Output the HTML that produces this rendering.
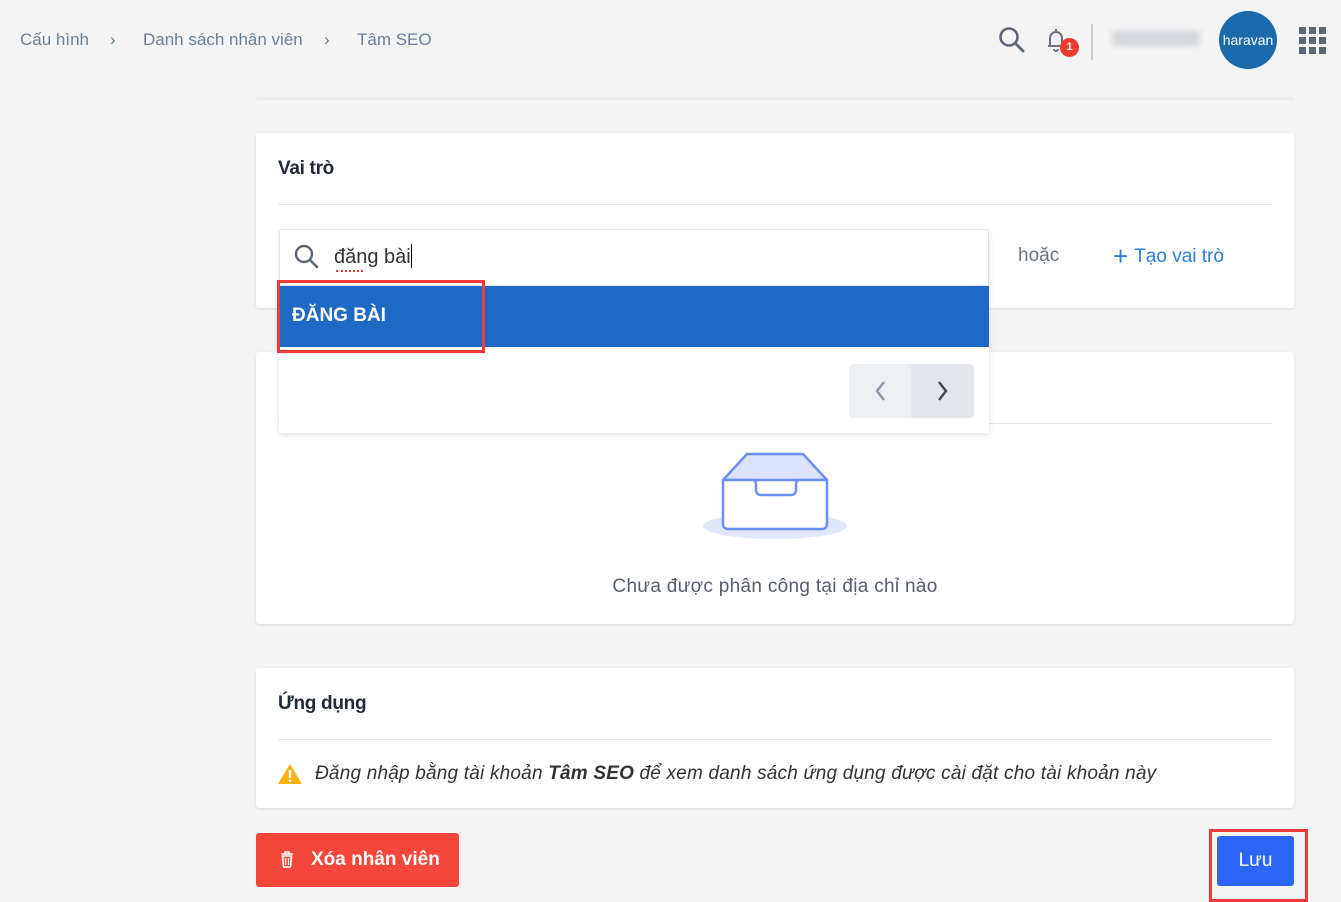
<!DOCTYPE html>
<html><head><meta charset="utf-8"><style>
*{box-sizing:border-box;margin:0;padding:0}
body{width:1341px;height:902px;background:#f4f4f4;font-family:"Liberation Sans",sans-serif;position:relative;overflow:hidden;color:#212b36}
.a{position:absolute}
.card{position:absolute;left:256px;width:1038px;background:#fff;border-radius:3px;box-shadow:0 1px 3px rgba(0,0,0,.1)}
.bc{font-size:17px;color:#6a7f99;top:30px}
.title{font-size:19px;font-weight:bold;color:#212b36;letter-spacing:-.3px}
.div{position:absolute;left:22px;right:22px;height:1px;background:#e3e6ea}
</style></head><body>
<div class="a bc" style="left:20px">Cấu hình</div>
<div class="a bc" style="left:110px">›</div>
<div class="a bc" style="left:143px">Danh sách nhân viên</div>
<div class="a bc" style="left:324px">›</div>
<div class="a bc" style="left:357px">Tâm SEO</div>

<div class="a" style="left:256px;top:97px;width:1038px;height:2px;background:#ebebeb;box-shadow:0 1px 2px rgba(0,0,0,.05)"></div>

<svg class="a" style="left:997px;top:25px" width="30" height="30" viewBox="0 0 30 30"><circle cx="12" cy="12" r="8.5" fill="none" stroke="#5b6676" stroke-width="2.6"/><path d="M18 18l8 8" stroke="#5b6676" stroke-width="2.8" stroke-linecap="round"/></svg>
<svg class="a" style="left:1044px;top:26px" width="26" height="28" viewBox="0 0 26 28"><path d="M4 20h16M6 20v-8a6 6 0 0 1 12 0v8M10 23a2 2 0 0 0 4 0M12 3v3" fill="none" stroke="#6b7482" stroke-width="2"/></svg>
<div class="a" style="left:1060px;top:38px;width:19px;height:19px;border-radius:50%;background:#f13b2f;color:#fff;font-size:11px;font-weight:bold;text-align:center;line-height:19px">1</div>
<div class="a" style="left:1091px;top:24px;width:2px;height:36px;background:#ccc"></div>
<div class="a" style="left:1112px;top:30px;width:88px;height:16px;background:#d5d9de;filter:blur(3px);border-radius:4px"></div>
<div class="a" style="left:1219px;top:11px;width:58px;height:58px;border-radius:50%;background:#1b6aac;color:#fff;font-size:14px;line-height:58px;text-align:center;overflow:hidden">haravan</div>
<svg class="a" style="left:1299px;top:27px" width="27" height="27" viewBox="0 0 27 27" fill="#5b6676"><rect x="0" y="0" width="7" height="7"/><rect x="10" y="0" width="7" height="7"/><rect x="20" y="0" width="7" height="7"/><rect x="0" y="10" width="7" height="7"/><rect x="10" y="10" width="7" height="7"/><rect x="20" y="10" width="7" height="7"/><rect x="0" y="20" width="7" height="7"/><rect x="10" y="20" width="7" height="7"/><rect x="20" y="20" width="7" height="7"/></svg>

<div class="card" style="top:133px;height:175px">
<div class="a title" style="left:22px;top:25px">Vai trò</div>
<div class="div" style="top:71px"></div>
<div class="a" style="left:762px;top:112px;font-size:19px;color:#6b7482">hoặc</div>
<div class="a" style="left:857px;top:113px;font-size:19px;color:#2a7de1"><span style="font-size:26px;line-height:19px;vertical-align:-3px;margin-right:6px">+</span>Tạo vai trò</div>
</div>

<div class="card" style="top:352px;height:272px">
<div class="div" style="top:71px"></div>
<svg class="a" style="left:445px;top:98px" width="150" height="94" viewBox="0 0 150 94"><ellipse cx="74" cy="76" rx="72" ry="13" fill="#e1e7fb"/><path d="M22 30L46 4h56l24 26z" fill="#dbe3fd" stroke="#6b8ff5" stroke-width="2.5" stroke-linejoin="round"/><path d="M22 30h30c3 0 3 3 3 6v4c0 3 2 5 5 5h30c3 0 5-2 5-5v-4c0-3 0-6 3-6h28v44c0 3-2 5-5 5H27c-3 0-5-2-5-5z" fill="#fff" stroke="#6b8ff5" stroke-width="2.5" stroke-linejoin="round"/></svg>
<div class="a" style="left:0;right:0;top:224px;text-align:center;font-size:19px;color:#555e6b;letter-spacing:.3px">Chưa được phân công tại địa chỉ nào</div>
</div>

<div class="a" style="left:279px;top:229px;width:710px;height:204px;background:#fff;border-radius:3px;box-shadow:0 2px 6px rgba(0,0,0,.12)">
<div class="a" style="left:0;top:0;width:710px;height:57px;border:1px solid #e1e4e8;border-radius:3px 3px 0 0"></div>
<svg class="a" style="left:14px;top:14px" width="28" height="28" viewBox="0 0 28 28"><circle cx="11" cy="11" r="8" fill="none" stroke="#5b6676" stroke-width="2.4"/><path d="M17 17l7 7" stroke="#5b6676" stroke-width="2.6" stroke-linecap="round"/></svg>
<div class="a" style="left:55px;top:15px;font-size:20px;color:#333">đăng bài<span style="display:inline-block;width:1px;height:24px;background:#000;vertical-align:-5px"></span></div>
<div class="a" style="left:57px;top:40px;width:27px;height:3px;border-bottom:2px dotted #e33"></div>
<div class="a" style="left:0;top:57px;width:710px;height:61px;background:#1f69c6"></div>
<div class="a" style="left:13px;top:76px;font-size:19px;color:#fff;font-weight:bold">ĐĂNG BÀI</div>
<div class="a" style="left:570px;top:135px;width:125px;height:54px;background:#edf0f3;border-radius:4px"></div>
<div class="a" style="left:632px;top:135px;width:63px;height:54px;background:#e2e6ea;border-radius:0 4px 4px 0"></div>
<svg class="a" style="left:594px;top:150px" width="16" height="24"><path d="M11 3L4 12l7 9" fill="none" stroke="#8a94a2" stroke-width="2.4"/></svg>
<svg class="a" style="left:655px;top:150px" width="16" height="24"><path d="M5 3l7 9-7 9" fill="none" stroke="#3b4656" stroke-width="2.4"/></svg>
</div>
<div class="a" style="left:277px;top:280px;width:208px;height:73px;border:3px solid #f0393d"></div>

<div class="card" style="top:668px;height:140px">
<div class="a title" style="left:22px;top:25px">Ứng dụng</div>
<div class="div" style="top:71px"></div>
<svg class="a" style="left:21px;top:94px" width="26" height="24" viewBox="0 0 26 24"><path d="M13 2L25 22H1z" fill="#f6b20e"/><rect x="11.8" y="8" width="2.4" height="8" fill="#fff"/><rect x="11.8" y="17.5" width="2.4" height="2.4" fill="#fff"/></svg>
<div class="a" style="left:59px;top:95px;font-size:19px;font-style:italic;color:#333;letter-spacing:.2px">Đăng nhập bằng tài khoản <b>Tâm SEO</b> để xem danh sách ứng dụng được cài đặt cho tài khoản này</div>
</div>

<div class="a" style="left:256px;top:833px;width:203px;height:54px;background:#f5463a;border-radius:3px;color:#fff;font-size:19px;font-weight:bold;line-height:54px;padding-left:55px">Xóa nhân viên</div>
<svg class="a" style="left:280px;top:851px" width="14" height="17" viewBox="0 0 14 17"><path d="M1 3h12M5 3V1h4v2M2.5 5h9l-1 11h-7z" fill="none" stroke="#fff" stroke-width="1.6"/><path d="M5.5 7v7M8.5 7v7" stroke="#fff" stroke-width="1.3"/></svg>
<div class="a" style="left:1209px;top:829px;width:99px;height:73px;border:3px solid #f0393d"></div>
<div class="a" style="left:1217px;top:836px;width:77px;height:50px;background:#2b66f6;border-radius:3px;color:#fff;font-size:19px;line-height:50px;text-align:center">Lưu</div>
</body></html>
